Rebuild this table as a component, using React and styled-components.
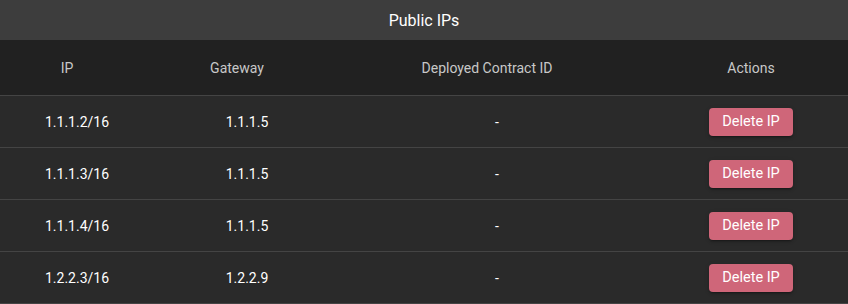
import React from "react";
import styled, { createGlobalStyle } from "styled-components";

const Global = createGlobalStyle`
  html, body { margin: 0; padding: 0; background: #2a2a2a; }
  body { font-family: Roboto, "Liberation Sans", Arial, sans-serif; }
`;

const Card = styled.div`
  width: 848px;
  background: #2a2a2a;
  color: #fff;
`;

const TitleBar = styled.div`
  height: 40px;
  background: #3d3d3d;
  display: flex;
  align-items: center;
  justify-content: center;
  font-size: 16px;
  color: #fff;
`;

const Table = styled.table`
  width: 100%;
  border-collapse: separate;
  border-spacing: 0;
  table-layout: fixed;
`;

const Th = styled.th`
  height: 56px;
  box-sizing: border-box;
  background: #212121;
  border-bottom: 1px solid #444;
  font-weight: 400;
  font-size: 14px;
  color: #c8c8c8;
  text-align: center;
  padding: 0 16px;
`;

const SortSpacer = styled.span`
  display: inline-block;
  width: 20px;
`;

const Td = styled.td`
  height: 52px;
  box-sizing: border-box;
  border-bottom: 1px solid #444;
  background: #2a2a2a;
  font-size: 14px;
  color: #fff;
  text-align: center;
  padding: 0 16px;
`;

const DeleteButton = styled.button`
  width: 84px;
  height: 28px;
  border: none;
  border-radius: 4px;
  background: #cf6679;
  color: #fff;
  font-family: inherit;
  font-size: 14.5px;
  box-shadow: 0 3px 1px -2px rgba(0,0,0,.2), 0 2px 2px 0 rgba(0,0,0,.14), 0 1px 5px 0 rgba(0,0,0,.12);
  cursor: pointer;
  padding: 0;
`;

const rows = [
  { ip: "1.1.1.2/16", gw: "1.1.1.5", id: "-" },
  { ip: "1.1.1.3/16", gw: "1.1.1.5", id: "-" },
  { ip: "1.1.1.4/16", gw: "1.1.1.5", id: "-" },
  { ip: "1.2.2.3/16", gw: "1.2.2.9", id: "-" },
];

export default function App() {
  return (
    <>
      <Global />
      <Card>
        <TitleBar>Public IPs</TitleBar>
        <Table>
          <colgroup>
            <col style={{ width: 154 }} />
            <col style={{ width: 186 }} />
            <col style={{ width: 314 }} />
            <col style={{ width: 194 }} />
          </colgroup>
          <thead>
            <tr>
              <Th>IP<SortSpacer /></Th>
              <Th>Gateway<SortSpacer /></Th>
              <Th>Deployed Contract ID<SortSpacer /></Th>
              <Th>Actions</Th>
            </tr>
          </thead>
          <tbody>
            {rows.map((r) => (
              <tr key={r.ip}>
                <Td>{r.ip}</Td>
                <Td>{r.gw}</Td>
                <Td>{r.id}</Td>
                <Td>
                  <DeleteButton>Delete IP</DeleteButton>
                </Td>
              </tr>
            ))}
          </tbody>
        </Table>
      </Card>
    </>
  );
}
